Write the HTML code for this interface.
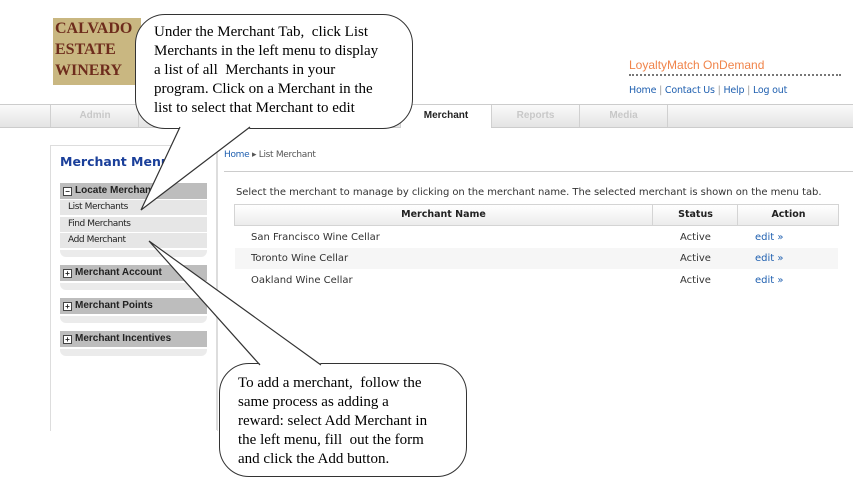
<!DOCTYPE html>
<html><head><style>
body{margin:0;width:853px;height:488px;position:relative;background:#fff;font-family:"DejaVu Sans","Liberation Sans",sans-serif;overflow:hidden}
.a{position:absolute}
.tab{position:absolute;top:105px;height:22px;font:bold 10px "Liberation Sans",sans-serif;color:#c8c8c8;text-align:center;line-height:22px;border-left:1px solid #d0d0d0}
.hd{position:absolute;left:60px;width:147px;height:16px;background:#bdbdbd;font:bold 10px "Liberation Sans",sans-serif;color:#222;line-height:16px;white-space:nowrap;overflow:hidden}
.hd i{display:inline-block;width:7px;height:7px;border:1px solid #444;background:#fff;margin:0 3px 0 3px;vertical-align:-1px;font-style:normal;font-size:8px;line-height:7px;text-align:center}
.it{position:absolute;left:60px;width:147px;height:15px;background:#e6e6e6;font:9px "DejaVu Sans",sans-serif;color:#222;line-height:15px;letter-spacing:-.4px}
.it span{padding-left:8px}
.ft{position:absolute;left:60px;width:147px;height:7px;background:#ebebeb;border-radius:0 0 6px 6px}
.row{position:absolute;left:235px;width:603px;height:21px;font:10px "DejaVu Sans",sans-serif;color:#333;line-height:21px}
.row span{position:absolute}
.cl{position:absolute;background:#fff;border:1.5px solid #333;border-radius:30px;font:15px "Liberation Serif",serif;color:#000;line-height:19px}
</style></head><body>
<div class="a" style="left:53px;top:18px;width:88px;height:67px;background:#c9b781"></div>
<div class="a" style="left:55px;top:18px;font:bold 16px 'Liberation Serif',serif;color:#6e2c1c;line-height:21px">CALVADO<br>ESTATE<br>WINERY</div>
<div class="a" style="left:629px;top:58px;font:12px 'Liberation Sans',sans-serif;color:#f0844a">LoyaltyMatch OnDemand</div>
<div class="a" style="left:629px;top:74px;width:212px;border-top:2px dotted #777"></div>
<div class="a" style="left:629px;top:85px;font:9.5px 'DejaVu Sans',sans-serif;color:#2060b0;letter-spacing:-.2px">Home <span style="color:#999">|</span> Contact Us <span style="color:#999">|</span> Help <span style="color:#999">|</span> Log out</div>
<div class="a" style="left:0;top:104px;width:853px;height:22px;background:linear-gradient(#fafafa,#e4e4e4);border-top:1px solid #ccc;border-bottom:1px solid #ccc"></div>
<div class="tab" style="left:50px;width:88px">Admin</div>
<div class="tab" style="left:138px;width:88px"></div>
<div class="tab" style="left:400px;width:90px;background:#fff;color:#222;height:23px">Merchant</div>
<div class="tab" style="left:491px;width:87px;border-right:1px solid #d0d0d0">Reports</div>
<div class="tab" style="left:579px;width:87px;border-right:1px solid #d0d0d0">Media</div>
<div class="a" style="left:50px;top:145px;width:166px;height:285px;border-left:1px solid #ddd;border-top:1px solid #ddd;border-right:1px solid #ddd"></div>
<div class="a" style="left:60px;top:154px;font:bold 12.5px 'DejaVu Sans',sans-serif;color:#1a3f9a">Merchant Menu</div>
<div class="hd" style="top:183px"><i>−</i>Locate Merchant</div>
<div class="it" style="top:200px"><span>List Merchants</span></div>
<div class="it" style="top:217px"><span>Find Merchants</span></div>
<div class="it" style="top:233px"><span>Add Merchant</span></div>
<div class="ft" style="top:250px"></div>
<div class="hd" style="top:265px"><i>+</i>Merchant Account</div><div class="ft" style="top:283px"></div>
<div class="hd" style="top:298px"><i>+</i>Merchant Points</div><div class="ft" style="top:316px"></div>
<div class="hd" style="top:331px"><i>+</i>Merchant Incentives</div><div class="ft" style="top:349px"></div>
<div class="a" style="left:224px;top:150px;font:9px 'DejaVu Sans',sans-serif;color:#555;letter-spacing:-.3px"><span style="color:#2060b0">Home</span> ▸ List Merchant</div>
<div class="a" style="left:224px;top:171px;width:629px;border-top:1px solid #ccc"></div>
<div class="a" style="left:236px;top:187px;font:10px 'DejaVu Sans',sans-serif;color:#333;letter-spacing:-.05px">Select the merchant to manage by clicking on the merchant name. The selected merchant is shown on the menu tab.</div>
<div class="a" style="left:234px;top:204px;width:603px;height:20px;background:linear-gradient(#fff,#ececec);border:1px solid #d4d4d4;font:bold 9.5px 'DejaVu Sans',sans-serif;color:#222;line-height:20px">
<span class="a" style="left:0;width:417px;text-align:center">Merchant Name</span>
<span class="a" style="left:417px;width:85px;text-align:center;border-left:1px solid #d4d4d4;height:20px">Status</span>
<span class="a" style="left:502px;width:101px;text-align:center;border-left:1px solid #d4d4d4;height:20px">Action</span></div>
<div class="row" style="top:227px"><span style="left:16px">San Francisco Wine Cellar</span><span style="left:445px">Active</span><span style="left:520px;color:#2060b0">edit »</span></div>
<div class="row" style="top:248px;background:#f6f6f6"><span style="left:16px">Toronto Wine Cellar</span><span style="left:445px">Active</span><span style="left:520px;color:#2060b0">edit »</span></div>
<div class="row" style="top:270px"><span style="left:16px">Oakland Wine Cellar</span><span style="left:445px">Active</span><span style="left:520px;color:#2060b0">edit »</span></div>
<div class="a" style="left:216px;top:145px;height:285px;border-left:1px solid #ddd"></div>
<div class="cl" style="left:135px;top:14px;width:276px;height:113px"><div style="padding:8px 0 0 18px">Under the Merchant Tab, &nbsp;click List<br>Merchants in the left menu to display<br>a list of all &nbsp;Merchants in your<br>program. Click on a Merchant in the<br>list to select that Merchant to edit</div></div>
<div class="cl" style="left:219px;top:363px;width:246px;height:112px"><div style="padding:10px 0 0 18px">To add a merchant, &nbsp;follow the<br>same process as adding a<br>reward: select Add Merchant in<br>the left menu, fill &nbsp;out the form<br>and click the Add button.</div></div>
<svg class="a" style="left:0;top:0" width="853" height="488">
<polygon points="180,128 141,210 250,128" fill="#fff"/>
<polyline points="180,127 141,210 250,127" fill="none" stroke="#333" stroke-width="1.2"/>
<polygon points="260,364 149,241 321,364" fill="#fff"/>
<polyline points="260,365 149,241 321,365" fill="none" stroke="#333" stroke-width="1.2"/>
</svg>
</body></html>
